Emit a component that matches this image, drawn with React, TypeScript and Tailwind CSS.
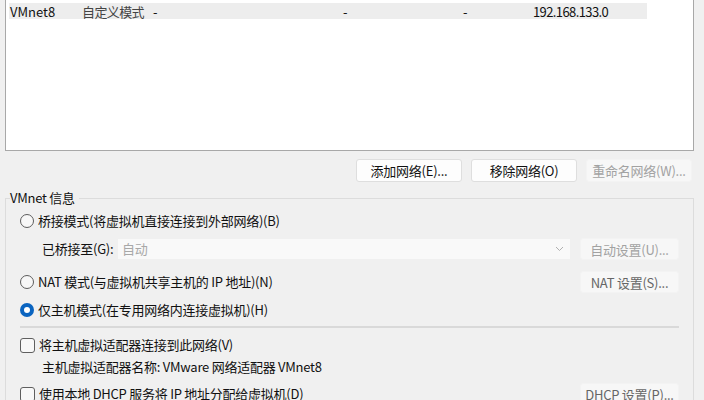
import React from "react";

const font = { fontFamily: '"Noto Sans CJK SC", "Noto Sans", sans-serif' };

function Radio({ checked }: { checked?: boolean }) {
  if (checked) {
    return (
      <span className="flex h-[14px] w-[14px] shrink-0 items-center justify-center rounded-full bg-[#0a64c0]">
        <span className="h-[6px] w-[6px] rounded-full bg-white" />
      </span>
    );
  }
  return <span className="h-[14px] w-[14px] shrink-0 rounded-full border border-[#5c5c5c] bg-[#f7f7f7]" />;
}

function Check() {
  return <span className="h-[15px] w-[15px] shrink-0 rounded-[3px] border border-[#5f5f5f] bg-[#f8f8f8]" />;
}

function Btn({ children, tone }: { children: React.ReactNode; tone: "on" | "mid" | "off" }) {
  const cls =
    tone === "on"
      ? "bg-[#fdfdfd] border-[#dedede] text-[#111]"
      : tone === "mid"
      ? "bg-[#f7f7f7] border-[#f3f3f3] text-[#6a6a6a]"
      : "bg-[#f7f7f7] border-[#f3f3f3] text-[#a2a2a2]";
  return (
    <div className={`flex h-[23px] w-[106px] items-center justify-center rounded-[3px] border text-[13px] leading-none ${cls}`}>
      {children}
    </div>
  );
}

function SmallBtn({ children, tone }: { children: React.ReactNode; tone: "mid" | "off" }) {
  const cls = tone === "mid" ? "text-[#666]" : "text-[#a2a2a2]";
  return (
    <div className={`flex h-[22px] w-[99px] shrink-0 items-center justify-center rounded-[3px] border border-[#f3f3f3] bg-[#f7f7f7] text-[13px] leading-none ${cls}`}>
      {children}
    </div>
  );
}

export default function App() {
  return (
    <div
      className="h-[400px] w-[704px] overflow-hidden bg-[#f0f0f0] px-[5px] text-[13px] tracking-[-0.25px] text-[#111]"
      style={font}
    >
      {/* list */}
      <div className="h-[151px] w-[689px] border-x border-b border-[#a8a8a8] bg-white pl-[3px] pt-[3px]">
        <div className="flex h-[16px] w-[638px] items-center bg-[#ededed] leading-none">
          <span className="w-[73px] pl-[1px] tracking-normal">VMnet8</span>
          <span className="w-[71px] tracking-[-0.6px] text-[#444]">自定义模式</span>
          <span className="w-[190px]">-</span>
          <span className="w-[120px]">-</span>
          <span className="w-[70px]">-</span>
          <span className="tracking-[-0.6px]">192.168.133.0</span>
        </div>
      </div>

      {/* buttons */}
      <div className="mt-[8px] flex w-[689px] justify-end gap-[9px] pr-[2px]">
        <Btn tone="on">添加网络(E)...</Btn>
        <Btn tone="on">移除网络(O)</Btn>
        <Btn tone="off">重命名网络(W)...</Btn>
      </div>

      {/* group */}
      <fieldset className="mt-[8px] w-[689px] border border-[#dcdcdc] pl-[14px] pr-[14px]">
        <legend className="-ml-[10px] pr-[4px] text-[13px] leading-[16px]">VMnet 信息</legend>

        <div className="flex h-[30px] items-center gap-[4px]">
          <Radio />
          <span>桥接模式(将虚拟机直接连接到外部网络)(B)</span>
        </div>

        <div className="mt-[2px] flex h-[22px] items-center pl-[22px]">
          <span className="w-[76px] shrink-0">已桥接至(G):</span>
          <div className="flex h-[20px] flex-1 items-center justify-between bg-[#f9f9f9] pl-[4px] pr-[6px]">
            <span className="text-[#a8a8a8]">自动</span>
            <svg width="9" height="6" viewBox="0 0 9 6" fill="none">
              <path d="M1 1l3.5 3.5L8 1" stroke="#b0b0b0" strokeWidth="1" />
            </svg>
          </div>
          <div className="ml-[10px]">
            <SmallBtn tone="off">自动设置(U)...</SmallBtn>
          </div>
        </div>

        <div className="mt-[11px] flex h-[22px] items-center justify-between">
          <div className="flex items-center gap-[4px]">
            <Radio />
            <span>NAT 模式(与虚拟机共享主机的 IP 地址)(N)</span>
          </div>
          <SmallBtn tone="mid">NAT 设置(S)...</SmallBtn>
        </div>

        <div className="mt-[6px] flex h-[22px] items-center gap-[4px]">
          <Radio checked />
          <span>仅主机模式(在专用网络内连接虚拟机)(H)</span>
        </div>

        <div className="mt-[5px] h-[2px] bg-[#d9d9d9]" />

        <div className="mt-[6px] flex h-[22px] items-center gap-[4px]">
          <Check />
          <span>将主机虚拟适配器连接到此网络(V)</span>
        </div>

        <div className="flex h-[22px] items-center pl-[22px]">
          <span>主机虚拟适配器名称: VMware 网络适配器 VMnet8</span>
        </div>

        <div className="mt-[5px] flex h-[22px] items-center justify-between">
          <div className="flex items-center gap-[4px]">
            <Check />
            <span>使用本地 DHCP 服务将 IP 地址分配给虚拟机(D)</span>
          </div>
          <SmallBtn tone="mid">DHCP 设置(P)...</SmallBtn>
        </div>
        <div className="h-[20px]" />
      </fieldset>
    </div>
  );
}
